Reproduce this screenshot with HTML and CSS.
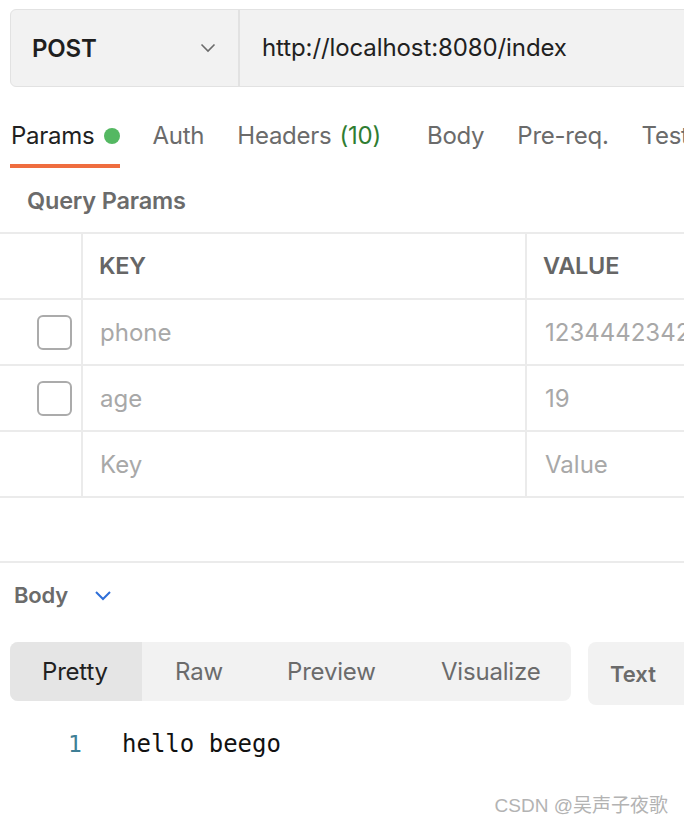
FILE: index.html
```html
<!DOCTYPE html>
<html>
<head>
<meta charset="utf-8">
<link rel="stylesheet" href="styles.css">
</head>
<body>
<div class="page">
  <div class="urlbar">
    <div class="method">
      <span class="method-name">POST</span>
      <svg class="chev" width="16" height="10" viewBox="0 0 16 10"><path d="M1.5 1.5 L8 8 L14.5 1.5" fill="none" stroke="#6b6b6b" stroke-width="1.6"/></svg>
    </div>
    <div class="url">http://localhost:8080/index</div>
  </div>

  <div class="tabs">
    <div class="tab active">Params <span class="dot"></span></div>
    <div class="tab">Auth</div>
    <div class="tab tab-wide">Headers <span class="count">(10)</span></div>
    <div class="tab">Body</div>
    <div class="tab">Pre-req.</div>
    <div class="tab">Tests</div>
  </div>

  <div class="section-title">Query Params</div>

  <div class="table">
    <div class="row head">
      <div class="cell check"></div>
      <div class="cell key">KEY</div>
      <div class="cell value">VALUE</div>
    </div>
    <div class="row">
      <div class="cell check"><span class="box"></span></div>
      <div class="cell key muted">phone</div>
      <div class="cell value muted">12344423423</div>
    </div>
    <div class="row">
      <div class="cell check"><span class="box"></span></div>
      <div class="cell key muted">age</div>
      <div class="cell value muted">19</div>
    </div>
    <div class="row">
      <div class="cell check"></div>
      <div class="cell key placeholder">Key</div>
      <div class="cell value placeholder">Value</div>
    </div>
  </div>

  <div class="resp">
    <div class="resp-head">
      <span class="resp-title">Body</span>
      <svg class="chev-blue" width="18" height="11" viewBox="0 0 18 11"><path d="M2 2 L9 9 L16 2" fill="none" stroke="#2f6fd8" stroke-width="2"/></svg>
    </div>
    <div class="toolbar">
      <div class="seg">
        <div class="seg-item selected">Pretty</div>
        <div class="seg-item raw">Raw</div>
        <div class="seg-item preview">Preview</div>
        <div class="seg-item">Visualize</div>
      </div>
      <div class="format">Text <span class="fmt-chev">⌄</span></div>
    </div>
    <div class="code">
      <span class="ln">1</span>
      <span class="src">hello beego</span>
    </div>
  </div>

  <div class="watermark">CSDN @吴声子夜歌</div>
</div>
</body>
</html>
```
FILE: styles.css
```css
html, body {
  margin: 0;
  padding: 0;
  background: #ffffff;
}
body {
  width: 684px;
  height: 822px;
  overflow: hidden;
  font-family: Inter, "Noto Sans", sans-serif;
  color: #212121;
}
.page {
  position: relative;
  width: 684px;
  height: 822px;
  overflow: hidden;
}

/* URL bar */
.urlbar {
  display: flex;
  margin: 9px 0 0 10px;
  width: 720px;
  height: 76px;
  background: #f2f2f2;
  border: 1px solid #e2e2e2;
  border-radius: 6px;
}
.method {
  width: 229px;
  flex-shrink: 0;
  display: flex;
  align-items: center;
  justify-content: space-between;
  padding: 0 22px 0 21px;
  box-sizing: border-box;
  border-right: 2px solid #e2e2e2;
}
.method-name {
  font-size: 24px;
  font-weight: 600;
  color: #1f1f1f;
  letter-spacing: -0.2px;
}
.url {
  display: flex;
  align-items: center;
  padding-left: 22px;
  font-size: 24px;
  letter-spacing: -0.1px;
  color: #212121;
  margin-top: -2px;
  white-space: nowrap;
}

/* Tabs */
.tabs {
  display: flex;
  gap: 33px;
  margin-top: 28px;
  padding-left: 10px;
  white-space: nowrap;
}
.tab {
  font-size: 24px;
  letter-spacing: -0.25px;
  line-height: 42px;
  padding: 0 0 7px 0;
  color: #6b6b6b;
  border-bottom: 4px solid transparent;
  display: flex;
  align-items: center;
  flex-shrink: 0;
}
.tab.active {
  color: #212121;
  border-bottom-color: #ef6d3f;
  padding-left: 1px;
}
.tab-wide {
  margin-right: 13px;
}
.dot {
  display: inline-block;
  width: 16px;
  height: 16px;
  border-radius: 50%;
  background: #54b862;
  margin-left: 9px;
}
.count {
  color: #2f7d32;
  margin-left: 8px;
}

.section-title {
  height: 64px;
  line-height: 66px;
  padding-left: 27px;
  font-size: 23.5px;
  font-weight: 600;
  color: #6b6b6b;
  letter-spacing: -0.2px;
}

/* Table */
.table {
  border-top: 2px solid #ebebeb;
  width: 720px;
}
.row {
  display: grid;
  grid-template-columns: 83px 444px 1fr;
  height: 64px;
  border-bottom: 2px solid #ebebeb;
}
.cell {
  display: flex;
  align-items: center;
  font-size: 24px;
  white-space: nowrap;
  overflow: hidden;
}
.cell.check {
  border-right: 2px solid #ebebeb;
  justify-content: flex-end;
  padding-right: 9px;
}
.cell.key {
  border-right: 2px solid #ebebeb;
  padding-left: 17px;
}
.cell.value {
  padding-left: 18px;
}
.head .cell {
  font-weight: 600;
  font-size: 23.5px;
  color: #666666;
  padding-left: 16px;
  letter-spacing: -0.2px;
  padding-bottom: 2px;
}
.head .cell.check { padding-left: 0; }
.head .cell.value { padding-left: 16px; }
.muted {
  color: #a8a8a8;
}
.placeholder {
  color: #a8a8a8;
}
.box {
  width: 31px;
  height: 31px;
  border: 2px solid #ababab;
  border-radius: 6px;
  background: #fff;
}

/* Response */
.resp {
  margin-top: 63px;
  border-top: 2px solid #ebebeb;
}
.resp-head {
  display: flex;
  align-items: center;
  height: 64px;
  padding-left: 14px;
}
.resp-title {
  font-size: 22px;
  font-weight: 600;
  color: #6b6b6b;
  letter-spacing: -0.2px;
}
.chev-blue {
  margin-left: 26px;
  margin-top: 1px;
}
.toolbar {
  display: flex;
  align-items: flex-start;
  margin-top: 15px;
  padding-left: 10px;
}
.seg {
  display: flex;
  flex-shrink: 0;
  width: 561px;
  height: 59px;
  background: #f2f2f2;
  border-radius: 8px;
  overflow: hidden;
}
.seg-item {
  display: flex;
  align-items: center;
  font-size: 24px;
  letter-spacing: -0.2px;
  color: #6b6b6b;
  flex-shrink: 0;
}
.seg-item.selected {
  width: 132px;
  padding-left: 32px;
  box-sizing: border-box;
  background: #e5e5e5;
  color: #212121;
}
.seg-item.raw {
  padding-left: 33px;
  width: 145px;
  box-sizing: border-box;
}
.seg-item.preview {
  width: 154px;
  box-sizing: border-box;
}
.format {
  display: flex;
  flex-shrink: 0;
  align-items: center;
  margin-left: 17px;
  width: 140px;
  height: 63px;
  padding-left: 22px;
  box-sizing: border-box;
  background: #f2f2f2;
  border-radius: 8px;
  font-size: 22px;
  font-weight: 600;
  color: #6b6b6b;
  white-space: nowrap;
}
.fmt-chev {
  margin-left: 27px;
  font-weight: 400;
}
.code {
  display: flex;
  align-items: center;
  height: 40px;
  margin-top: 19px;
  padding-left: 68px;
}
.ln {
  font-family: "DejaVu Sans Mono", monospace;
  font-size: 23px;
  color: #3f7f96;
  width: 54px;
}
.src {
  font-family: "DejaVu Sans Mono", monospace;
  font-size: 24px;
  color: #111111;
}
.watermark {
  position: absolute;
  right: 16px;
  top: 790px;
  font-family: "Liberation Sans", "Noto Sans CJK SC", sans-serif;
  font-size: 19px;
  color: #b3b3b3;
}
```
